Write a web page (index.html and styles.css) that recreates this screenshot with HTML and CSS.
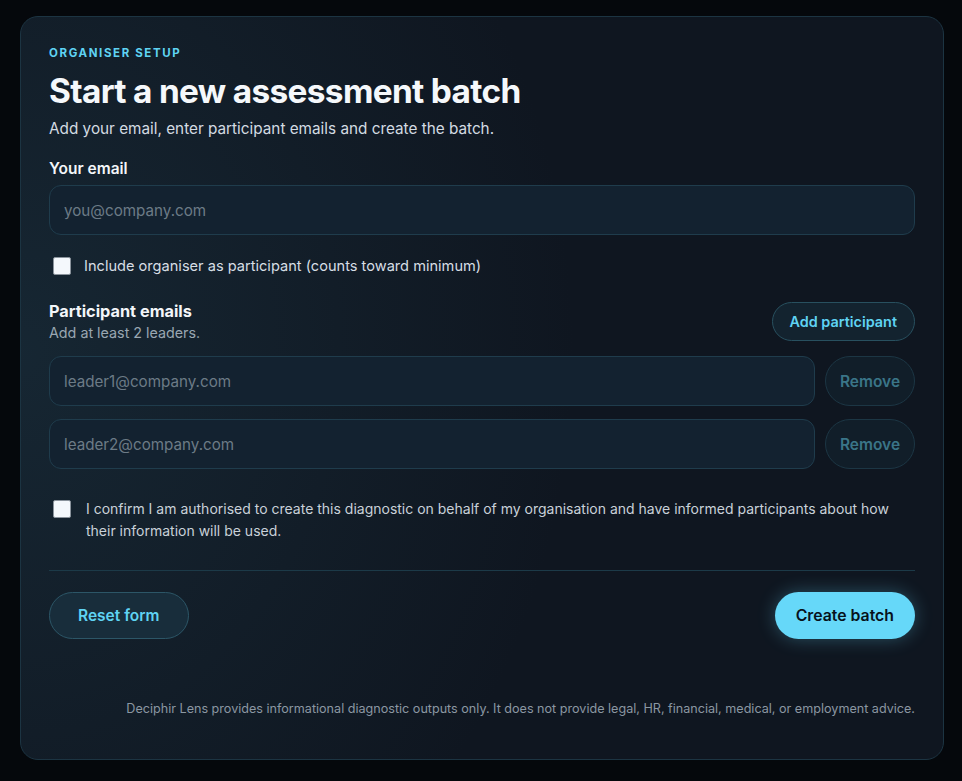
FILE: index.html
```html
<!DOCTYPE html>
<html lang="en">
<head>
  <meta charset="UTF-8" />
  <meta name="viewport" content="width=device-width, initial-scale=1.0" />
  <title>Organiser setup</title>
  <link rel="stylesheet" href="styles.css">
</head>
<body>

  <div class="card">
    <div class="eyebrow">Organiser setup</div>
    <h1 class="title">Start a new assessment batch</h1>
    <p class="lead">Add your email, enter participant emails and create the batch.</p>

    <form id="batchForm" class="batch-form">
      <label class="field-label" for="ownerEmail">Your email</label>
      <input type="email" id="ownerEmail" class="text-input" placeholder="you@company.com" />

      <label class="check-row">
        <input type="checkbox" id="includeOwner" />
        <span>Include organiser as participant (counts toward minimum)</span>
      </label>

      <div class="participants-head">
        <div>
          <div class="section-label">Participant emails</div>
          <div class="hint">Add at least 2 leaders.</div>
        </div>
        <button type="button" class="btn-outline" id="addParticipant">Add participant</button>
      </div>

      <div class="participant-list" id="participantList">
        <div class="participant-row">
          <input type="email" class="text-input" placeholder="leader1@company.com" />
          <button type="button" class="btn-remove" disabled>Remove</button>
        </div>
        <div class="participant-row">
          <input type="email" class="text-input" placeholder="leader2@company.com" />
          <button type="button" class="btn-remove" disabled>Remove</button>
        </div>
      </div>

      <label class="check-row confirm">
        <input type="checkbox" id="confirmAuth" />
        <span>I confirm I am authorised to create this diagnostic on behalf of my organisation and have informed participants about how their information will be used.</span>
      </label>

      <div class="actions">
        <button type="reset" class="btn-outline btn-lg">Reset form</button>
        <button type="submit" class="btn-primary">Create batch</button>
      </div>
    </form>

    <p class="disclaimer">Deciphir Lens provides informational diagnostic outputs only. It does not provide legal, HR, financial, medical, or employment advice.</p>
  </div>

</body>
</html>
```

FILE: styles.css
```css
* {
  box-sizing: border-box;
  margin: 0;
  padding: 0;
}
body {
  font-family: Inter, "Noto Sans", Arial, sans-serif;
  background-color: #05080c;
  color: #e6edf3;
  padding: 16px 18px 22px 20px;
}
.card {
  border: 1px solid #1c3442;
  border-radius: 18px;
  background: radial-gradient(ellipse 60% 90% at 0% 45%, rgba(28, 52, 66, 0.55), rgba(28, 52, 66, 0) 100%), #0f1620;
  padding: 28px 28px 41px;
}
.eyebrow {
  font-size: 11.5px;
  font-weight: 700;
  letter-spacing: 0.14em;
  text-transform: uppercase;
  color: #5fd3f3;
  line-height: 16px;
}
.title {
  font-size: 33.4px;
  font-weight: 700;
  letter-spacing: -0.02em;
  line-height: 40px;
  color: #f5f8fb;
  margin-top: 10px;
}
.lead {
  font-size: 15.3px;
  line-height: 22px;
  color: #d3dbe2;
  margin-top: 7px;
}
.batch-form {
  display: flex;
  flex-direction: column;
  margin-top: 18px;
}
.field-label {
  font-size: 15.5px;
  font-weight: 600;
  line-height: 22px;
  color: #f3f6f9;
}
.section-label {
  font-size: 16.3px;
  font-weight: 700;
  line-height: 22px;
  color: #f3f6f9;
}
.text-input {
  width: 100%;
  height: 50px;
  border: 1px solid #1f3c4c;
  border-radius: 12px;
  background: #132230;
  padding: 0 14px;
  font-family: inherit;
  font-size: 15.2px;
  color: #e6edf3;
  outline: none;
}
.text-input::placeholder {
  color: #6c7b86;
}
#ownerEmail {
  margin-top: 5px;
}
.check-row {
  display: flex;
  align-items: center;
  gap: 13px;
  font-size: 14.6px;
  line-height: 22px;
  color: #d7dee5;
  margin-top: 20px;
  padding-left: 4px;
}
.check-row input {
  appearance: none;
  width: 18px;
  height: 18px;
  flex-shrink: 0;
  background: #f4f8fc;
  border: 1px solid #8a939c;
  border-radius: 2px;
}
.check-row.confirm {
  align-items: flex-start;
  gap: 15px;
  font-size: 14px;
  color: #c9d1d9;
  margin-top: 29px;
}
.check-row.confirm input {
  margin-top: 2px;
}
.participants-head {
  display: flex;
  justify-content: space-between;
  align-items: flex-start;
  margin-top: 23px;
}
.participants-head .btn-outline {
  margin-top: 2px;
}
.hint {
  font-size: 14.3px;
  line-height: 22px;
  color: #9aa7b2;
}
.btn-outline {
  font-family: inherit;
  font-size: 14.4px;
  font-weight: 600;
  color: #5fd3f3;
  background: #13232f;
  border: 1px solid #28505f;
  border-radius: 999px;
  height: 39px;
  padding: 0 17px;
  cursor: pointer;
}
.participant-list {
  display: flex;
  flex-direction: column;
  gap: 13px;
  margin-top: 12px;
}
.participant-row {
  display: flex;
  gap: 10px;
}
.btn-remove {
  flex-shrink: 0;
  width: 90px;
  height: 50px;
  font-family: inherit;
  font-size: 15.5px;
  font-weight: 600;
  color: #3a7588;
  background: #111e29;
  border: 1px solid #1c3644;
  border-radius: 999px;
}
.actions {
  display: flex;
  justify-content: space-between;
  align-items: center;
  border-top: 1px solid #1c3a48;
  margin-top: 28px;
  padding-top: 21px;
}
.btn-lg {
  height: 47px;
  padding: 0 28px;
  font-size: 15.5px;
  background: #182d3b;
  border-color: #2c5667;
}
.btn-primary {
  height: 47px;
  padding: 0 21px;
  font-family: inherit;
  font-size: 15.8px;
  font-weight: 600;
  color: #07121b;
  background: #66d8f9;
  border: none;
  border-radius: 999px;
  box-shadow: 0 0 18px rgba(102, 216, 249, 0.3);
  cursor: pointer;
}
.disclaimer {
  text-align: right;
  font-size: 12.6px;
  line-height: 18px;
  color: #8b97a2;
  margin-top: 61px;
}
```
